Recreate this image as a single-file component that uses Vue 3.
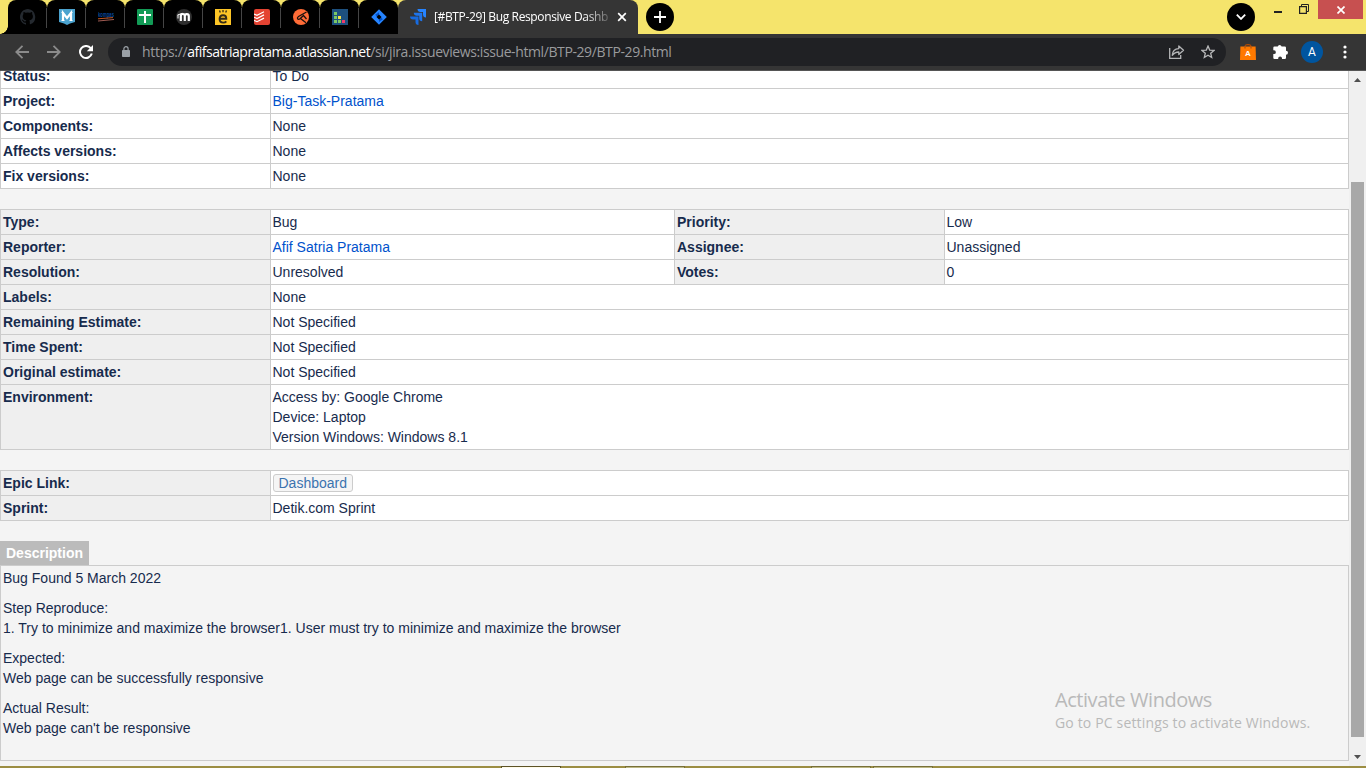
<script setup>
const details = [
  { label: 'Status:', value: 'To Do' },
  { label: 'Project:', value: 'Big-Task-Pratama', link: true },
  { label: 'Components:', value: 'None' },
  { label: 'Affects versions:', value: 'None' },
  { label: 'Fix versions:', value: 'None' },
]
const pairs = [
  { label: 'Type:', value: 'Bug', label2: 'Priority:', value2: 'Low' },
  { label: 'Reporter:', value: 'Afif Satria Pratama', link: true, label2: 'Assignee:', value2: 'Unassigned' },
  { label: 'Resolution:', value: 'Unresolved', label2: 'Votes:', value2: '0' },
]
const singles = [
  { label: 'Labels:', lines: ['None'] },
  { label: 'Remaining Estimate:', lines: ['Not Specified'] },
  { label: 'Time Spent:', lines: ['Not Specified'] },
  { label: 'Original estimate:', lines: ['Not Specified'] },
  { label: 'Environment:', lines: ['Access by: Google Chrome', 'Device: Laptop', 'Version Windows: Windows 8.1'] },
]
const description = [
  ['Bug Found 5 March 2022'],
  ['Step Reproduce:', '1. Try to minimize and maximize the browser1. User must try to minimize and maximize the browser'],
  ['Expected:', 'Web page can be successfully responsive'],
  ['Actual Result:', "Web page can't be responsive"],
]
</script>

<template>
  <div class="screen">
    <header class="tabstrip">
      <div class="corner"></div>
      <div class="tab">
        <svg width="16" height="16" viewBox="0 0 16 16"><path fill="#24292f" d="M8 0C3.58 0 0 3.58 0 8c0 3.54 2.29 6.53 5.47 7.59.4.07.55-.17.55-.38v-1.5c-2 .4-2.7-.4-2.9-1.1-.2-.4-.5-.9-.9-1.2-.3-.2-.7-.6 0-.6.6 0 1 .6 1.200.8.7 1.200 1.900.9 2.400.7.1-.5.300-.9.500-1.100-1.800-.2-3.600-.9-3.600-4 0-.9.300-1.600.8-2.100-.1-.2-.4-1 .1-2.100 0 0 .7-.2 2.200.8a7.500 7.500 0 0 1 4 0c1.500-1 2.200-.8 2.200-.8.400 1.100.2 1.900.1 2.100.5.600.8 1.300.8 2.100 0 3.100-1.900 3.800-3.700 4 .3.300.6.700.6 1.500v2.200c0 .2.100.5.500.4A8 8 0 0 0 8 0Z"/></svg>
      </div>
      <div class="tab">
        <svg width="16" height="16" viewBox="0 0 16 16"><path fill="#4ba3cf" d="M0 0h16v13l-5 1.500L8 16l-3-1.500L0 13Z"/><path fill="none" stroke="#fff" stroke-width="2.200" d="M4 11.500V4l4 5 4-5v7.500"/><path fill="none" stroke="#fff" stroke-width="1.200" d="M2.500 3.500H5M11 3.500h2.500M2.500 11.500h3M10.500 11.500h3"/></svg>
      </div>
      <div class="tab">
        <svg width="16" height="16" viewBox="0 0 16 16"><text x="0" y="8" class="kompas" textLength="16" lengthAdjust="spacingAndGlyphs">kompas</text><path stroke="#f26b2b" stroke-width=".8" d="M0 9.800 15 8.600"/><path stroke="#9f5b52" stroke-width="1" d="M0 12 16 10.500"/></svg>
      </div>
      <div class="tab">
        <svg width="16" height="16" viewBox="0 0 16 16"><rect width="16" height="16" rx="1" fill="#129b56"/><path stroke="#fff" stroke-width="2" d="M8 2v12M2 6h12"/></svg>
      </div>
      <div class="tab">
        <svg width="16" height="16" viewBox="0 0 16 16"><circle cx="8" cy="8" r="8" fill="#303030"/><path fill="none" stroke="#fff" stroke-width="2.200" d="M4.800 12V7q0-2 2-2t2 2v5M8.800 7q0-1.800 2-1.800t2 1.800v5"/><path stroke="#fff" d="M1.500 6 6.500 4.300M2 6v3.500"/></svg>
      </div>
      <div class="tab">
        <svg width="16" height="16" viewBox="0 0 16 16"><rect width="16" height="16" fill="#fdc526"/><path fill="none" stroke="#342b17" stroke-width="1.900" d="M4.800 9.700h6.500q0-3.400-3.200-3.400-3.500 0-3.500 3.700 0 3.600 3.700 3.600 2 0 3-1.200"/><path stroke="#342b17" stroke-width="1.300" d="M4.500 1.500l.8 2M8 1v2.300M11.500 1.500l-.8 2"/></svg>
      </div>
      <div class="tab">
        <svg width="16" height="16" viewBox="0 0 16 16"><rect width="16" height="16" rx="2" fill="#e44332"/><path fill="none" stroke="#fff" stroke-width="1.200" d="M0 5l3 1.300L10 2.700M0 8.200l3 1.300 7-3.600M0 11.400l3 1.300 7-3.600"/></svg>
      </div>
      <div class="tab">
        <svg width="16" height="16" viewBox="0 0 16 16"><circle cx="8" cy="8" r="8" fill="#ff6c37"/><path fill="none" stroke="#17110e" stroke-width="1.300" d="M13.500 3 5.500 7.500c-2.300 1.800-.5 4 1.500 2.300L11 6M7.500 9.500l5.500 4.200M10.500 6.500l3 3.500"/></svg>
      </div>
      <div class="tab">
        <svg width="16" height="16" viewBox="0 0 16 16"><rect width="16" height="16" fill="#1d507e"/><path fill="#7bc864" d="M2 3h3v3H2zM2 7h3v3H2zM2 11h3v3H2zM6 11h3v3H6z"/><path fill="#f5e344" d="M6 7h3v3H6z"/><path fill="#ee3b6a" d="M10 11h3v3h-3z"/></svg>
      </div>
      <div class="tab last">
        <svg width="16" height="16" viewBox="0 0 16 16"><path fill="#2684ff" d="M8 .2 15.800 8 8 15.800.2 8Z"/><path fill="#0052cc" d="M8 3.200v3l-1.800 1.800-2-2.200ZM8 13V9.800L9.800 8l2 2.200Z"/><path fill="#000" d="M8 5.500 10.500 8 8 10.500 5.500 8Z"/></svg>
      </div>
      <div class="active">
        <svg width="16" height="16" viewBox="0 0 16 16"><path fill="#2684ff" d="M7.500 0H16v8.500c-2 0-3-1.200-3-3V3h-2.500C8.700 3 7.500 1.800 7.500 0Z"/><path fill="#1f74ea" d="M3.800 3.800h8.400v8.400c-1.900 0-3-1.200-3-3V6.800H6.800c-1.800 0-3-1.200-3-3Z"/><path fill="#176be0" d="M0 7.500h8.500V16c-2 0-3-1.200-3-3v-2.500H3c-1.800 0-3-1.200-3-3Z"/></svg>
        <span class="title">[#BTP-29] Bug Responsive Dashb</span>
        <svg class="close" width="10" height="10" viewBox="0 0 10 10"><path stroke="#fff" stroke-width="1.700" d="m1.200 1.200 7.600 7.600m0-7.600L1.200 8.800"/></svg>
      </div>
      <div class="round plus"><svg width="12" height="12" viewBox="0 0 12 12"><path stroke="#fff" stroke-width="1.800" d="M6 0v12M0 6h12"/></svg></div>
      <div class="grow"></div>
      <div class="round chev"><svg width="10" height="6" viewBox="0 0 10 6"><path fill="none" stroke="#fff" stroke-width="1.800" d="m.8.700 4.200 4.200L9.200.7"/></svg></div>
      <div class="winmin"></div>
      <svg class="winmax" width="10" height="10" viewBox="0 0 10 10"><path fill="none" stroke="#222" d="M2.500 2V.5h7v7H8"/><path fill="none" stroke="#222" stroke-width="1.200" d="M.6 2.600h6.800v6.800H.6z"/></svg>
      <div class="winclose"><svg width="8" height="8" viewBox="0 0 8 8"><path stroke="#fff" stroke-width="1.700" d="m.5.5 7 7m0-7-7 7"/></svg></div>
    </header>

    <div class="toolbar">
      <svg class="nav" width="14" height="14" viewBox="0 0 14 14"><path fill="none" stroke="#8b8b8b" stroke-width="1.800" d="M14 7H1.500M7.500.8 1.300 7l6.200 6.200"/></svg>
      <svg class="nav fwd" width="14" height="14" viewBox="0 0 14 14"><path fill="none" stroke="#8b8b8b" stroke-width="1.800" d="M0 7h12.500M6.500.8 12.700 7l-6.200 6.200"/></svg>
      <svg class="nav reload" width="14" height="14" viewBox="0 0 14 14"><path fill="none" stroke="#fff" stroke-width="2" d="M11.700 3.200A6 6 0 1 0 12.800 8.600"/><path fill="#fff" d="M14 0v6.200H7.800Z"/></svg>
      <div class="omni">
        <svg class="lock" width="8" height="11" viewBox="0 0 8 11"><path fill="none" stroke="#9aa0a6" stroke-width="1.200" d="M1.900 5V2.800a2.100 2.100 0 0 1 4.200 0V5"/><rect y="4" width="8" height="7" rx=".8" fill="#9aa0a6"/></svg>
        <span class="url"><span>https://</span><b>afifsatriapratama.atlassian.net</b><span class="path">/si/jira.issueviews:issue-html/BTP-29/BTP-29.html</span></span>
        <svg class="share" width="16" height="14" viewBox="0 0 16 14"><path fill="none" stroke="#b4b5b7" stroke-width="1.300" d="M.7 3v10.300h11V10"/><path fill="none" stroke="#b4b5b7" stroke-width="1.300" stroke-linejoin="round" d="M3.300 10.300C3.500 6 6 3.800 9.800 3.600V1l4.700 4.300-4.700 4.300V7C7 7 5 8 3.300 10.300Z"/></svg>
        <svg class="star" width="14" height="14" viewBox="0 0 14 14"><path fill="none" stroke="#b8b9ba" stroke-width="1.300" d="m7 1.100 1.700 4 4.300.3-3.300 2.900 1 4.200L7 10.300l-3.700 2.200 1-4.200L1 5.400l4.300-.3Z"/></svg>
      </div>
      <svg class="bag" width="16" height="16" viewBox="0 0 16 16"><path fill="none" stroke="#a94a08" stroke-width="1.300" d="M5 5V2.500Q5 .6 8 .6t3 1.900V5"/><path fill="#ff7900" d="M.4 2.500h15.200L16 16H0Z"/><path fill="none" stroke="#9c4a12" d="M5 2.500v2M11 2.500v2"/><text x="8" y="12.300" class="bagletter" text-anchor="middle">A</text></svg>
      <svg class="puzzle" width="15" height="15" viewBox="0 0 15 15"><path fill="#fff" d="M1.500 2.500h3.200a2 2 0 0 1 3.900 0h3.200a1.200 1.200 0 0 1 1.200 1.200v3a2 2 0 0 1 0 4v3a1.200 1.200 0 0 1-1.200 1.200H9v-.6a1.900 1.900 0 0 0-3.800 0v.6H1.500A1.200 1.200 0 0 1 .3 13.700V10H1a1.800 1.800 0 0 0 0-3.700H.3V3.700a1.200 1.200 0 0 1 1.200-1.200Z"/></svg>
      <div class="avatar">A</div>
      <svg class="dots" width="4" height="14" viewBox="0 0 4 14"><circle cx="2" cy="2" r="1.600" fill="#fff"/><circle cx="2" cy="7" r="1.600" fill="#fff"/><circle cx="2" cy="12" r="1.600" fill="#fff"/></svg>
    </div>

    <div class="viewport">
      <main class="page">
        <div class="table plain">
          <div v-for="r in details" :key="r.label" class="row">
            <div class="label">{{ r.label }}</div>
            <div class="value"><a v-if="r.link">{{ r.value }}</a><template v-else>{{ r.value }}</template></div>
          </div>
        </div>

        <div class="table">
          <div v-for="r in pairs" :key="r.label" class="row four">
            <div class="label">{{ r.label }}</div>
            <div class="value"><a v-if="r.link">{{ r.value }}</a><template v-else>{{ r.value }}</template></div>
            <div class="label mid">{{ r.label2 }}</div>
            <div class="value">{{ r.value2 }}</div>
          </div>
          <div v-for="r in singles" :key="r.label" class="row">
            <div class="label">{{ r.label }}</div>
            <div class="value"><div v-for="l in r.lines" :key="l">{{ l }}</div></div>
          </div>
        </div>

        <div class="table">
          <div class="row"><div class="label">Epic Link:</div><div class="value epic"><span class="chip">Dashboard</span></div></div>
          <div class="row"><div class="label">Sprint:</div><div class="value">Detik.com Sprint</div></div>
        </div>

        <h3 class="heading">Description</h3>
        <section class="description">
          <p v-for="(p, i) in description" :key="i"><span v-for="l in p" :key="l">{{ l }}</span></p>
        </section>
      </main>
      <aside class="scrollbar">
        <svg width="7" height="4" viewBox="0 0 7 4"><path fill="#505050" d="M3.500 0 7 4H0Z"/></svg>
        <div class="thumb"></div>
        <svg class="down" width="7" height="4" viewBox="0 0 7 4"><path fill="#505050" d="M3.500 4 7 0H0Z"/></svg>
      </aside>
    </div>
    <footer class="taskbar"><i class="dark"></i><i></i><i class="third"></i><i class="fourth"></i></footer>
    <div class="watermark"><div class="big">Activate Windows</div><div class="small">Go to PC settings to activate Windows.</div></div>
  </div>
</template>

<style>
html, body { overflow: hidden; }
</style>

<style scoped>
* { box-sizing: border-box; }
.screen { position: relative; width: 1366px; height: 768px; overflow: hidden; display: flex; flex-direction: column; background: #f4f4f4; font: 14px/20px "Liberation Sans", Arial, sans-serif; color: #172b4d; }
svg { display: block; flex: none; }
.tabstrip { height: 34px; flex: none; display: flex; background: #f5e46c; }
.corner { width: 8px; flex: none; background: radial-gradient(circle at 0 26px, #f5e46c 7.500px, #000 8px); clip-path: inset(26px 0 0 0); }
.tab { width: 39px; height: 34px; flex: none; padding: 9px 0 0 12px; background: #000; border-radius: 8px 8px 0 0; position: relative; }
.tab::after { content: ''; position: absolute; right: 0; top: 8px; width: 1px; height: 20px; background: #454545; }
.tab.last::after { display: none; }
.kompas { font: bold 7px "Liberation Sans", sans-serif; fill: #06479b; }
.active { width: 240px; height: 34px; flex: none; display: flex; padding: 9px 11px 0 12px; background: #353535; border-radius: 8px 8px 0 0; color: #fff; }
.title { width: 175px; margin-left: 8px; height: 16px; white-space: nowrap; overflow: hidden; font: 12px/16px "Open Sans", "Noto Sans", sans-serif; letter-spacing: -.36px; -webkit-mask-image: linear-gradient(90deg, #000 150px, #0003 175px); mask-image: linear-gradient(90deg, #000 150px, #0003 175px); }
.close { margin: 3px 0 0 8px; }
.round { width: 28px; height: 28px; margin-top: 3px; flex: none; border-radius: 50%; background: #000; display: flex; align-items: center; justify-content: center; }
.plus { margin-left: 8px; }
.grow { flex: 1; }
.winmin { width: 8px; height: 2px; margin: 11px 17px 0 19px; background: #222; }
.winmax { margin: 4px 9px 0 0; }
.winclose { width: 45px; height: 19px; margin-right: 3px; background: #c75050; display: flex; align-items: center; justify-content: center; }
.toolbar { height: 37px; flex: none; display: flex; align-items: center; padding: 0 0 1px 15px; background: #353535; border-bottom: 1px solid #555; }
.fwd { margin-left: 18px; }
.reload { margin-left: 18px; }
.omni { width: 1118px; height: 28px; flex: none; margin-left: 15px; display: flex; align-items: center; padding: 0 11px 0 14px; border-radius: 14px; background: #202124; }
.lock { margin-top: -1px; }
.url { margin-left: 12px; flex: 1; white-space: nowrap; font: 14px/20px "Open Sans", "Noto Sans", sans-serif; letter-spacing: -.3px; color: #9a9b9d; }
.url b { font-weight: 400; color: #fff; letter-spacing: -.52px; }
.path { letter-spacing: -.4px; }
.star { margin-left: 16px; }
.bag { margin-left: 14px; }
.bagletter { font: bold 8px "Liberation Sans", sans-serif; fill: #fff; }
.puzzle { margin-left: 17px; }
.avatar { width: 22px; height: 22px; margin-left: 13px; flex: none; border-radius: 50%; background: #00559f; color: #fff; font: 12px/22px Roboto, sans-serif; text-align: center; }
.dots { margin-left: 20px; }
.viewport { height: 695px; flex: none; display: flex; overflow: hidden; }
.page { width: 1349px; height: 695px; overflow: hidden; }
.table { width: 1349px; margin-bottom: 20px; background: #fff; border: solid #ccc; border-width: 1px 1px 0 1px; }
.plain { margin-top: -7px; border-top: 0; }
.row { display: grid; grid-template-columns: 269px 1fr; border-bottom: 1px solid #ccc; }
.four { grid-template-columns: 269px 404px 270px 1fr; }
.label { padding: 2px; font-weight: 700; background: #efefef; }
.plain .label { background: #fff; }
.value { padding: 2px 2px 2px 1.500px; border-left: 1px solid #ccc; min-height: 24px; }
.mid { border-left: 1px solid #ccc; }
.value a { color: #0052cc; }
.epic { display: flex; padding-left: 2px; }
.chip { height: 18px; margin: 1px 0 0; padding: 0 4.500px; line-height: 17px; border: 1px solid #ccc; border-radius: 3px; background: #f5f5f5; color: #3b73af; }
.heading { display: table; height: 24px; margin: 0; padding: 2px 6px; font: bold 14px/20px "Liberation Sans", sans-serif; color: #fff; background: #bbb; }
.description { width: 1349px; height: 196px; padding: 2px; border: 1px solid #ccc; }
.description p { margin: 0 0 10px; }
.description span { display: block; }
.scrollbar { width: 17px; display: flex; flex-direction: column; align-items: center; padding-top: 7px; background: #f0f0f0; }
.thumb { width: 13px; height: 555px; margin-top: 100px; background: #a8a8a8; }
.down { margin-top: 18px; }
.taskbar { height: 2px; display: flex; padding-left: 501px; background: #9c8e43; }
.taskbar i { width: 60px; height: 2px; margin-right: 64px; background: #bdb885; border: solid #787038; border-width: 1px 1px 0; }
.taskbar .dark { background: #fffbe9; border-color: #5c5225; }
.taskbar .third { margin: 0 2px 0 62px; }
.watermark { position: absolute; left: 1055px; top: 687px; white-space: nowrap; color: #b9b9b9; font-family: "Open Sans", "Noto Sans", sans-serif; }
.big { font-size: 20px; line-height: 26px; letter-spacing: -.45px; }
.small { font-size: 14px; line-height: 20px; letter-spacing: .16px; }
</style>
